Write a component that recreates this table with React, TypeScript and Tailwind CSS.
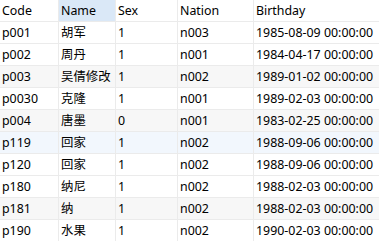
import React from "react";

const rows: { c: string; n: string; s: string; na: string; b: string; bg: string }[] = [
  { c: "p001", n: "胡军", s: "1", na: "n003", b: "1985-08-09 00:00:00", bg: "bg-white" },
  { c: "p002", n: "周丹", s: "1", na: "n001", b: "1984-04-17 00:00:00", bg: "bg-white" },
  { c: "p003", n: "吴倩修改", s: "1", na: "n002", b: "1989-01-02 00:00:00", bg: "bg-[#f7f7f7]" },
  { c: "p0030", n: "克隆", s: "1", na: "n001", b: "1989-02-03 00:00:00", bg: "bg-white" },
  { c: "p004", n: "唐墨", s: "0", na: "n001", b: "1983-02-25 00:00:00", bg: "bg-[#f7f7f7]" },
  { c: "p119", n: "回家", s: "1", na: "n002", b: "1988-09-06 00:00:00", bg: "bg-[#f2f7fd]" },
  { c: "p120", n: "回家", s: "1", na: "n002", b: "1988-09-06 00:00:00", bg: "bg-white" },
  { c: "p180", n: "纳尼", s: "1", na: "n002", b: "1988-02-03 00:00:00", bg: "bg-white" },
  { c: "p181", n: "纳", s: "1", na: "n002", b: "1988-02-03 00:00:00", bg: "bg-[#f7f7f7]" },
  { c: "p190", n: "水果", s: "1", na: "n002", b: "1990-02-03 00:00:00", bg: "bg-white" },
];

const cell = "h-[22px] border-r border-b border-[#ebebeb] pl-[2px] leading-[21px] whitespace-nowrap overflow-hidden";

export default function App() {
  return (
    <div
      className="w-[379px] h-[241px] overflow-hidden bg-white text-[12.4px] text-black"
      style={{ fontFamily: '"Noto Sans", "Noto Sans CJK SC", sans-serif' }}
    >
      <div className="grid grid-cols-[59px_57px_62px_76px_140px]">
        <div className={cell}>Code</div>
        <div className={`${cell} bg-[#dae8f7]`}>Name</div>
        <div className={cell}>Sex</div>
        <div className={cell}>Nation</div>
        <div className={cell}>Birthday</div>
        {rows.map((r) => (
          <React.Fragment key={r.c}>
            <div className={`${cell} ${r.bg}`}>{r.c}</div>
            <div className={`${cell} ${r.bg}`}>{r.n}</div>
            <div className={`${cell} ${r.bg}`}>{r.s}</div>
            <div className={`${cell} ${r.bg}`}>{r.na}</div>
            <div className={`${cell} ${r.bg}`}>{r.b}</div>
          </React.Fragment>
        ))}
      </div>
    </div>
  );
}
